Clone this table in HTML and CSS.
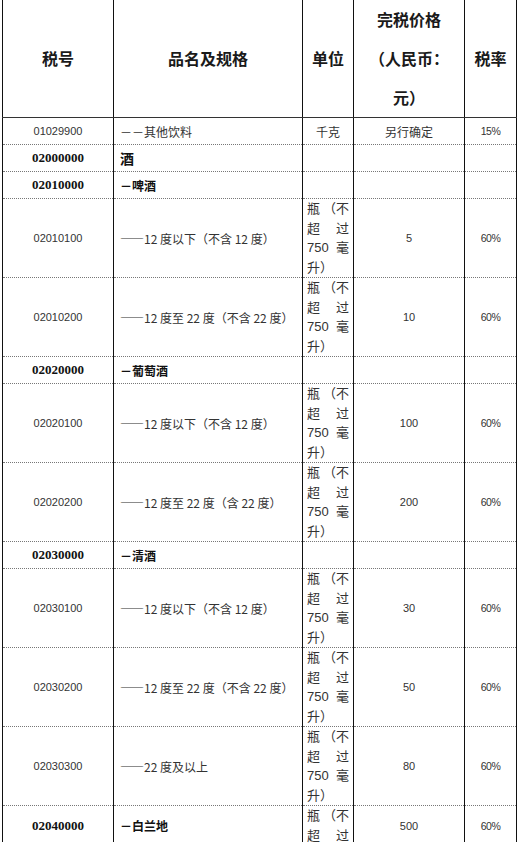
FILE: index.html
```html
<!DOCTYPE html>
<html lang="zh-CN">
<head>
<meta charset="utf-8">
<title>税号表</title>
<link rel="stylesheet" href="styles.css">
</head>
<body>
<table class="tax">
  <colgroup>
    <col class="c-code"><col class="c-name"><col class="c-unit"><col class="c-price"><col class="c-rate">
  </colgroup>
  <thead>
    <tr class="head">
      <th>税号</th>
      <th>品名及规格</th>
      <th>单位</th>
      <th>完税价格<br>（人民币：<br>元）</th>
      <th>税率</th>
    </tr>
  </thead>
  <tbody>
    <tr class="short">
      <td class="code">01029900</td>
      <td class="name">－－其他饮料</td>
      <td class="unit-c">千克</td>
      <td class="price cjk">另行确定</td>
      <td class="rate">15%</td>
    </tr>
    <tr class="short">
      <td class="code bold">02000000</td>
      <td class="name cat top">酒</td>
      <td class="unit-c"></td><td class="price"></td><td class="rate"></td>
    </tr>
    <tr class="short">
      <td class="code bold">02010000</td>
      <td class="name cat">－啤酒</td>
      <td class="unit-c"></td><td class="price"></td><td class="rate"></td>
    </tr>
    <tr class="long">
      <td class="code">02010100</td>
      <td class="name">——12 度以下（不含 12 度）</td>
      <td class="unit"><span class="ln"><span>瓶</span><span>（不</span></span><span class="ln"><span>超</span><span>过</span></span><span class="ln"><span>750</span><span>毫</span></span><span class="ln"><span>升）</span></span></td>
      <td class="price">5</td>
      <td class="rate">60%</td>
    </tr>
    <tr class="long">
      <td class="code">02010200</td>
      <td class="name">——12 度至 22 度（不含 22 度）</td>
      <td class="unit"><span class="ln"><span>瓶</span><span>（不</span></span><span class="ln"><span>超</span><span>过</span></span><span class="ln"><span>750</span><span>毫</span></span><span class="ln"><span>升）</span></span></td>
      <td class="price">10</td>
      <td class="rate">60%</td>
    </tr>
    <tr class="short">
      <td class="code bold">02020000</td>
      <td class="name cat">－葡萄酒</td>
      <td class="unit-c"></td><td class="price"></td><td class="rate"></td>
    </tr>
    <tr class="long">
      <td class="code">02020100</td>
      <td class="name">——12 度以下（不含 12 度）</td>
      <td class="unit"><span class="ln"><span>瓶</span><span>（不</span></span><span class="ln"><span>超</span><span>过</span></span><span class="ln"><span>750</span><span>毫</span></span><span class="ln"><span>升）</span></span></td>
      <td class="price">100</td>
      <td class="rate">60%</td>
    </tr>
    <tr class="long">
      <td class="code">02020200</td>
      <td class="name">——12 度至 22 度（含 22 度）</td>
      <td class="unit"><span class="ln"><span>瓶</span><span>（不</span></span><span class="ln"><span>超</span><span>过</span></span><span class="ln"><span>750</span><span>毫</span></span><span class="ln"><span>升）</span></span></td>
      <td class="price">200</td>
      <td class="rate">60%</td>
    </tr>
    <tr class="short">
      <td class="code bold">02030000</td>
      <td class="name cat">－清酒</td>
      <td class="unit-c"></td><td class="price"></td><td class="rate"></td>
    </tr>
    <tr class="long">
      <td class="code">02030100</td>
      <td class="name">——12 度以下（不含 12 度）</td>
      <td class="unit"><span class="ln"><span>瓶</span><span>（不</span></span><span class="ln"><span>超</span><span>过</span></span><span class="ln"><span>750</span><span>毫</span></span><span class="ln"><span>升）</span></span></td>
      <td class="price">30</td>
      <td class="rate">60%</td>
    </tr>
    <tr class="long">
      <td class="code">02030200</td>
      <td class="name">——12 度至 22 度（不含 22 度）</td>
      <td class="unit"><span class="ln"><span>瓶</span><span>（不</span></span><span class="ln"><span>超</span><span>过</span></span><span class="ln"><span>750</span><span>毫</span></span><span class="ln"><span>升）</span></span></td>
      <td class="price">50</td>
      <td class="rate">60%</td>
    </tr>
    <tr class="long">
      <td class="code">02030300</td>
      <td class="name">——22 度及以上</td>
      <td class="unit"><span class="ln"><span>瓶</span><span>（不</span></span><span class="ln"><span>超</span><span>过</span></span><span class="ln"><span>750</span><span>毫</span></span><span class="ln"><span>升）</span></span></td>
      <td class="price">80</td>
      <td class="rate">60%</td>
    </tr>
    <tr class="cut">
      <td class="code bold">02040000</td>
      <td class="name cat">－白兰地</td>
      <td class="unit"><span class="ln"><span>瓶</span><span>（不</span></span><span class="ln"><span>超</span><span>过</span></span></td>
      <td class="price">500</td>
      <td class="rate">60%</td>
    </tr>
  </tbody>
</table>
</body>
</html>
```

FILE: styles.css
```css
html, body {
  margin: 0;
  padding: 0;
  background: #fff;
  overflow: hidden;
}
body {
  height: 842px;
  color: #222;
  font-family: "Noto Sans CJK SC", sans-serif;
}
.tax {
  margin-left: 2px;
  border-collapse: collapse;
  table-layout: fixed;
  width: 515px;
}
.c-code { width: 111px; }
.c-name { width: 189px; }
.c-unit { width: 51px; }
.c-price { width: 111px; }
.c-rate { width: 52px; }

.tax th, .tax td {
  padding: 0;
  border-left: 1px solid #111;
  border-right: 1px solid #111;
  border-top: 1px dotted #777;
  border-bottom: 1px dotted #777;
  vertical-align: middle;
  overflow: hidden;
}
.tax th {
  border-top: none;
  border-bottom: 1px solid #333;
  height: 117px;
  font-size: 16px;
  font-weight: bold;
  line-height: 39px;
  text-align: center;
  color: #1a1a1a;
}
.short td { height: 26px; }
.long td { height: 77px; }
.cut td { height: 37px; }

.code {
  text-align: center;
  font-family: "Liberation Sans", sans-serif;
  font-size: 11px;
  color: #333;
}
.code.bold {
  font-family: "Liberation Serif", serif;
  font-weight: bold;
  font-size: 13px;
  color: #111;
}
.name {
  padding-left: 6px !important;
  font-size: 12px;
  font-family: "Noto Sans CJK SC", sans-serif;
  white-space: nowrap;
  color: #333;
}
.name.cat {
  font-weight: bold;
  color: #111;
}
.name.top {
  font-size: 14px;
}
.unit-c {
  text-align: center;
  font-size: 12px;
  color: #333;
}
.unit {
  padding: 0 4px 0 4px !important;
  font-size: 13px;
  line-height: 19.5px;
  color: #333;
}
.ln {
  display: flex;
  justify-content: space-between;
  font-family: "Liberation Sans", "Noto Sans CJK SC", sans-serif;
}
.price {
  text-align: center;
  font-family: "Liberation Sans", sans-serif;
  font-size: 11px;
  color: #333;
}
.price.cjk {
  font-family: "Noto Sans CJK SC", sans-serif;
  font-size: 12px;
}
.rate {
  text-align: center;
  font-family: "Liberation Sans", sans-serif;
  font-size: 10.5px;
  color: #333;
  letter-spacing: -0.5px;
}
```
